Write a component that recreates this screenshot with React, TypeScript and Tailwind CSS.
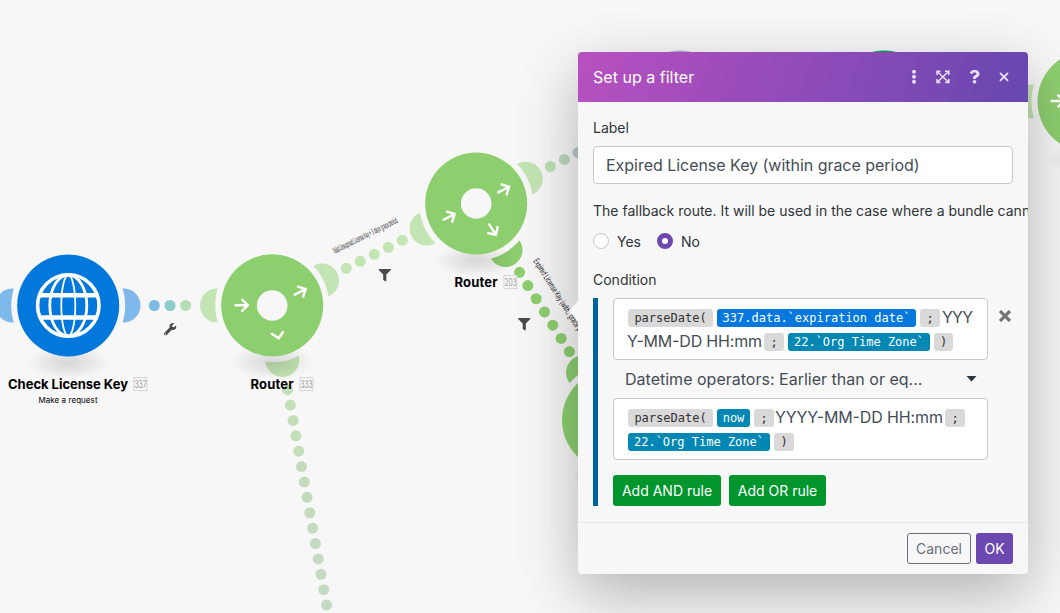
import React from "react";
import { FaWrench, FaFilter, FaQuestion } from "react-icons/fa";

type Dot = { x: number; y: number; c: string };

const GREEN = "#8dce6f";
const PALE = "#c3e4b3";

const inbound: Dot[] = [
  { x: 154.3, y: 305.5, c: "#7cb9e3" },
  { x: 170, y: 305.5, c: "#8ccccb" },
  { x: 185.7, y: 305.5, c: "#b6deb6" },
];
const upper: Dot[] = [0, 1, 2, 3, 4].map((i) => ({ x: 346.3 + i * 14, y: 268.3 - i * 7, c: PALE }));
const outer: Dot[] = [
  { x: 550.3, y: 166.5, c: "#bfe0b3" },
  { x: 564.3, y: 159.4, c: "#bed8bd" },
  { x: 578, y: 152.5, c: "#bccbc8" },
];
const active: Dot[] = [0, 1, 2, 3, 4, 5, 6].map((i) => ({ x: 519.5 + i * 8.32, y: 272.3 + i * 13.22, c: GREEN }));
const lower: Dot[] = Array.from({ length: 15 }, (_, i) => ({
  x: 287.5 + i * 2.79,
  y: 389.7 + i * 15.38,
  c: i < 5 ? "#c4dfb8" : i < 10 ? "#c4dcbd" : "#c4dac2",
}));

function Ear({ x, y, c }: Dot) {
  return <circle cx={x} cy={y} r="17" fill={c} />;
}

function Disc({ x, y, fill }: { x: number; y: number; fill: string }) {
  return (
    <g>
      <circle cx={x} cy={y} r="57" fill="#f7f7f7" />
      <ellipse cx={x} cy={y + 57} rx="42" ry="17" fill="url(#ground)" />
      <circle cx={x} cy={y} r="51" fill={fill} />
    </g>
  );
}

function Arrow({ x, y, a }: { x: number; y: number; a: number }) {
  return (
    <g transform={`translate(${x} ${y}) rotate(${a})`} fill="none" stroke="#fff" strokeWidth="2.4">
      <path d="M-7 0H6M0 -6.3L6.3 0L0 6.3" />
    </g>
  );
}

function NodeName({ x, y, w, name, id, idX }: { x: number; y: number; w: number; name: string; id: string; idX: number }) {
  return (
    <g>
      <text x={x} y={y} textLength={w} fontSize="13" fontWeight="700" fill="#000">{name}</text>
      <rect x={idX + 0.9} y={y - 11.4} width="13" height="13" fill="#f7f7f7" stroke="#d6d6d6" />
      <text x={idX + 1.4} y={y - 1.2} textLength="12.2" lengthAdjust="spacingAndGlyphs" fontSize="10.5" fill="#9b9b9b">{id}</text>
    </g>
  );
}

function Canvas() {
  return (
    <svg className="absolute inset-0" width="1060" height="613" fontFamily="Inter, sans-serif">
      <defs>
        <radialGradient id="ground">
          <stop offset="0" stopColor="#000" stopOpacity="0.13" />
          <stop offset="0.5" stopColor="#000" stopOpacity="0.07" />
          <stop offset="1" stopColor="#000" stopOpacity="0" />
        </radialGradient>
      </defs>
      <Ear x={12.5} y={305.5} c="#7fb8ea" />
      <Ear x={123.5} y={305.5} c="#7fb8ea" />
      <Ear x={217} y={305.5} c={PALE} />
      <Ear x={322} y={280.5} c={PALE} />
      <Ear x={282.3} y={360} c={PALE} />
      <Ear x={426.5} y={228.5} c={PALE} />
      <Ear x={525.7} y={178.7} c={PALE} />
      <Ear x={505.5} y={250} c={GREEN} />
      <Ear x={583} y={372.5} c={GREEN} />
      <Ear x={1033} y={101.5} c={PALE} />
      <Disc x={68.2} y={305.5} fill="#0278dd" />
      <Disc x={272.2} y={305.3} fill={GREEN} />
      <Disc x={476.2} y={203.5} fill={GREEN} />
      <Disc x={613} y={420} fill={GREEN} />
      <Disc x={1088.5} y={101.5} fill={GREEN} />
      <circle cx="680" cy="101.5" r="51" fill="#b5b3e2" />
      <circle cx="884" cy="101.5" r="51" fill="#0f9d58" />
      {[inbound, upper, outer, active, lower].flat().map((d, i) => (
        <circle key={i} cx={d.x} cy={d.y} r="5.5" fill={d.c} />
      ))}

      <g transform="translate(68.3 305.5)" fill="none" stroke="#fff">
        <circle r="30.7" strokeWidth="3.6" />
        <ellipse rx="18.5" ry="30.5" strokeWidth="2.8" />
        <ellipse rx="7" ry="30.5" strokeWidth="1.8" />
        <path d="M-29 -10.3H29M-29 12H29" strokeWidth="4.6" />
      </g>

      <circle cx="272.2" cy="305.5" r="15.3" fill="#f7f7f7" />
      <Arrow x={241.5} y={305.3} a={0} />
      <Arrow x={300} y={292} a={-27} />
      <path d="M271 333.3L278.8 338.3L283.5 331.3" fill="none" stroke="#fff" strokeWidth="2.5" />
      <circle cx="476.2" cy="203.5" r="15.3" fill="#f7f7f7" />
      <Arrow x={449} y={217} a={-27} />
      <Arrow x={503.5} y={189.7} a={-27} />
      <Arrow x={492.5} y={229.5} a={57} />
      <Arrow x={1057.5} y={101} a={0} />

      <NodeName x={8} y={389} w={120} name="Check License Key" id="337" idX={133} />
      <text x="38.5" y="403" textLength="59" fontSize="8" fill="#000">Make a request</text>
      <NodeName x={250.5} y={389} w={43} name="Router" id="333" idX={299} />
      <NodeName x={454.5} y={287} w={43} name="Router" id="203" idX={503} />

      <g fontSize="8.5" fill="#222">
        <text transform="translate(334.5 254) rotate(-26.5)" textLength="71" lengthAdjust="spacingAndGlyphs">Valid Unexpired License Key + 3 days grace period</text>
        <text transform="translate(533 261) rotate(57.7)" textLength="98" lengthAdjust="spacingAndGlyphs">Expired License Key (with.. grace period)</text>
      </g>
      <FaWrench x="164" y="323" size={12.5} color="#4a4a4a" />
      <FaFilter x="378.5" y="269" size={12.5} color="#4a4a4a" />
      <FaFilter x="518" y="318" size={12.5} color="#4a4a4a" />
    </svg>
  );
}

function Token({ children, className }: { children: React.ReactNode; className: string }) {
  return (
    <span className={`flex h-[18px] shrink-0 items-center justify-center rounded-[3px] font-['DejaVu_Sans_Mono',monospace] text-[12px] ${className}`}>
      {children}
    </span>
  );
}

function Plain({ w, children }: { w: number; children: string }) {
  return (
    <svg width={w} height="24" className="shrink-0 overflow-visible">
      <text y="17" textLength={w} fontSize="16" fill="#434d56">{children}</text>
    </svg>
  );
}

const field = "flex h-[62px] w-[375px] flex-col rounded border border-[#c8c8c8] bg-white pl-[14px] pt-[7px]";
const grey = "bg-[#d9d9d9] text-[#333]";
const teal = "bg-[#0087b4] text-white";

export default function App() {
  return (
    <div className="relative flex h-[613px] w-[1060px] items-start justify-end overflow-hidden bg-[#f7f7f7] pr-8 pt-[52px] font-['Inter',sans-serif] text-[#2f3439]">
      <Canvas />
      <section className="relative flex h-[522px] w-[450px] flex-col rounded-[4px] bg-[#f7f7f7] shadow-[0_20px_60px_rgba(0,0,0,0.28)]">
        <svg className="absolute -left-[9px] top-[249px]" width="9" height="20"><path d="M9 0L0 10L9 20Z" fill="#f7f7f7" /></svg>
        <header className="flex h-[50px] shrink-0 items-center rounded-t-[4px] bg-[linear-gradient(110deg,#b850c0_0%,#6747b0_100%)] px-[15px] text-white">
          <h1 className="flex-1 pb-px text-[16px] tracking-[0.02px]">Set up a filter</h1>
          <svg width="110" height="20" className="-mr-[5px]">
            <g fill="#e9def5">
              <circle cx="6" cy="4.7" r="2" /><circle cx="6" cy="9.7" r="2" /><circle cx="6" cy="14.7" r="2" />
            </g>
            <g fill="none" stroke="#e9def5" strokeWidth="1.5">
              <path d="M29 8V4.2H32.5M37 4.2H40.8V8M40.8 12V15.5H37M32.5 15.5H29V12M29.5 4.7L40.3 15M40.3 4.7L29.5 15" />
              <path d="M92 5.8L100 13.8M100 5.8L92 13.8" strokeWidth="1.9" />
            </g>
            <FaQuestion x="59.5" y="2.7" size={14} color="#e9def5" />
          </svg>
        </header>
        <div className="flex h-[420px] flex-col overflow-hidden px-[15px] text-[14px]">
          <label className="mt-4 h-5 leading-5">Label</label>
          <div className="mt-2 flex h-[38px] w-[420px] shrink-0 items-center rounded border border-[#c8c8c8] bg-white px-3 text-[16px] tracking-[-0.03px] text-[#434d56]">Expired License Key (within grace period)</div>
          <p className="mt-[17px] h-5 whitespace-nowrap leading-5">The fallback route. It will be used in the case where a bundle cannot</p>
          <div className="mt-[10px] flex h-5 items-center">
            <span className="h-4 w-4 rounded-full border border-[#c8c8c8] bg-white" />
            <span className="ml-2 w-10">Yes</span>
            <span className="h-4 w-4 rounded-full border-[5px] border-[#6b49b0] bg-white" />
            <span className="ml-2">No</span>
          </div>
          <h2 className="mt-[19px] h-5 leading-5">Condition</h2>
          <div className="mt-2 flex h-[208px] shrink-0 border-l-[5px] border-[#00649c] pl-[15px]">
            <div className="flex w-[375px] flex-col">
              <div className={field}>
                <div className="flex h-6 items-center">
                  <Token className={`w-[85px] ${grey}`}>parseDate(</Token>
                  <Token className="ml-1 w-[199px] bg-[#0278dd] text-white">337.data.`expiration date`</Token>
                  <Token className={`ml-1 mr-[2px] w-5 ${grey}`}>;</Token>
                  <Plain w={31}>YYY</Plain>
                </div>
                <div className="-ml-px flex h-6 items-center">
                  <Plain w={135}>Y-MM-DD HH:mm</Plain>
                  <Token className={`ml-[2px] w-5 ${grey}`}>;</Token>
                  <Token className={`ml-1 w-[142px] ${teal}`}>22.`Org Time Zone`</Token>
                  <Token className={`ml-1 w-[19px] ${grey}`}>)</Token>
                </div>
              </div>
              <div className="flex h-[38px] items-center justify-between pb-px pl-3 pr-[11px] text-[16px] text-[#434d56]">
                <span className="tracking-[0.01px]">Datetime operators: Earlier than or eq...</span>
                <svg width="11" height="6"><path d="M0.5 0H10.5L5.5 5.5Z" fill="#30363b" /></svg>
              </div>
              <div className={field}>
                <div className="flex h-6 items-center">
                  <Token className={`w-[85px] ${grey}`}>parseDate(</Token>
                  <Token className={`ml-1 w-[33px] ${teal}`}>now</Token>
                  <Token className={`ml-1 mr-px w-5 ${grey}`}>;</Token>
                  <Plain w={168}>YYYY-MM-DD HH:mm</Plain>
                  <Token className={`ml-[2px] w-5 ${grey}`}>;</Token>
                </div>
                <div className="flex h-6 items-center">
                  <Token className={`w-[142px] ${teal}`}>22.`Org Time Zone`</Token>
                  <Token className={`ml-1 w-5 ${grey}`}>)</Token>
                </div>
              </div>
              <div className="mt-[15px] flex gap-2 text-white">
                <button className="h-[31px] w-[108px] rounded-[3px] bg-[#00962d]">Add AND rule</button>
                <button className="h-[31px] w-[97px] rounded-[3px] bg-[#00962d]">Add OR rule</button>
              </div>
            </div>
            <svg className="ml-[11px] mt-3" width="13" height="12"><path d="M1 1L11 11M11 1L1 11" stroke="#757575" strokeWidth="3.2" /></svg>
          </div>
        </div>
        <footer className="flex h-[52px] items-center justify-end gap-[5px] border-t border-[#e9e9e9] px-[15px] text-[14px]">
          <button className="h-[31px] w-16 rounded-[3px] border border-[#66717b] text-[#66717b]">Cancel</button>
          <button className="h-[31px] w-[37px] rounded-[3px] bg-[#6b49b0] text-white">OK</button>
        </footer>
      </section>
    </div>
  );
}
